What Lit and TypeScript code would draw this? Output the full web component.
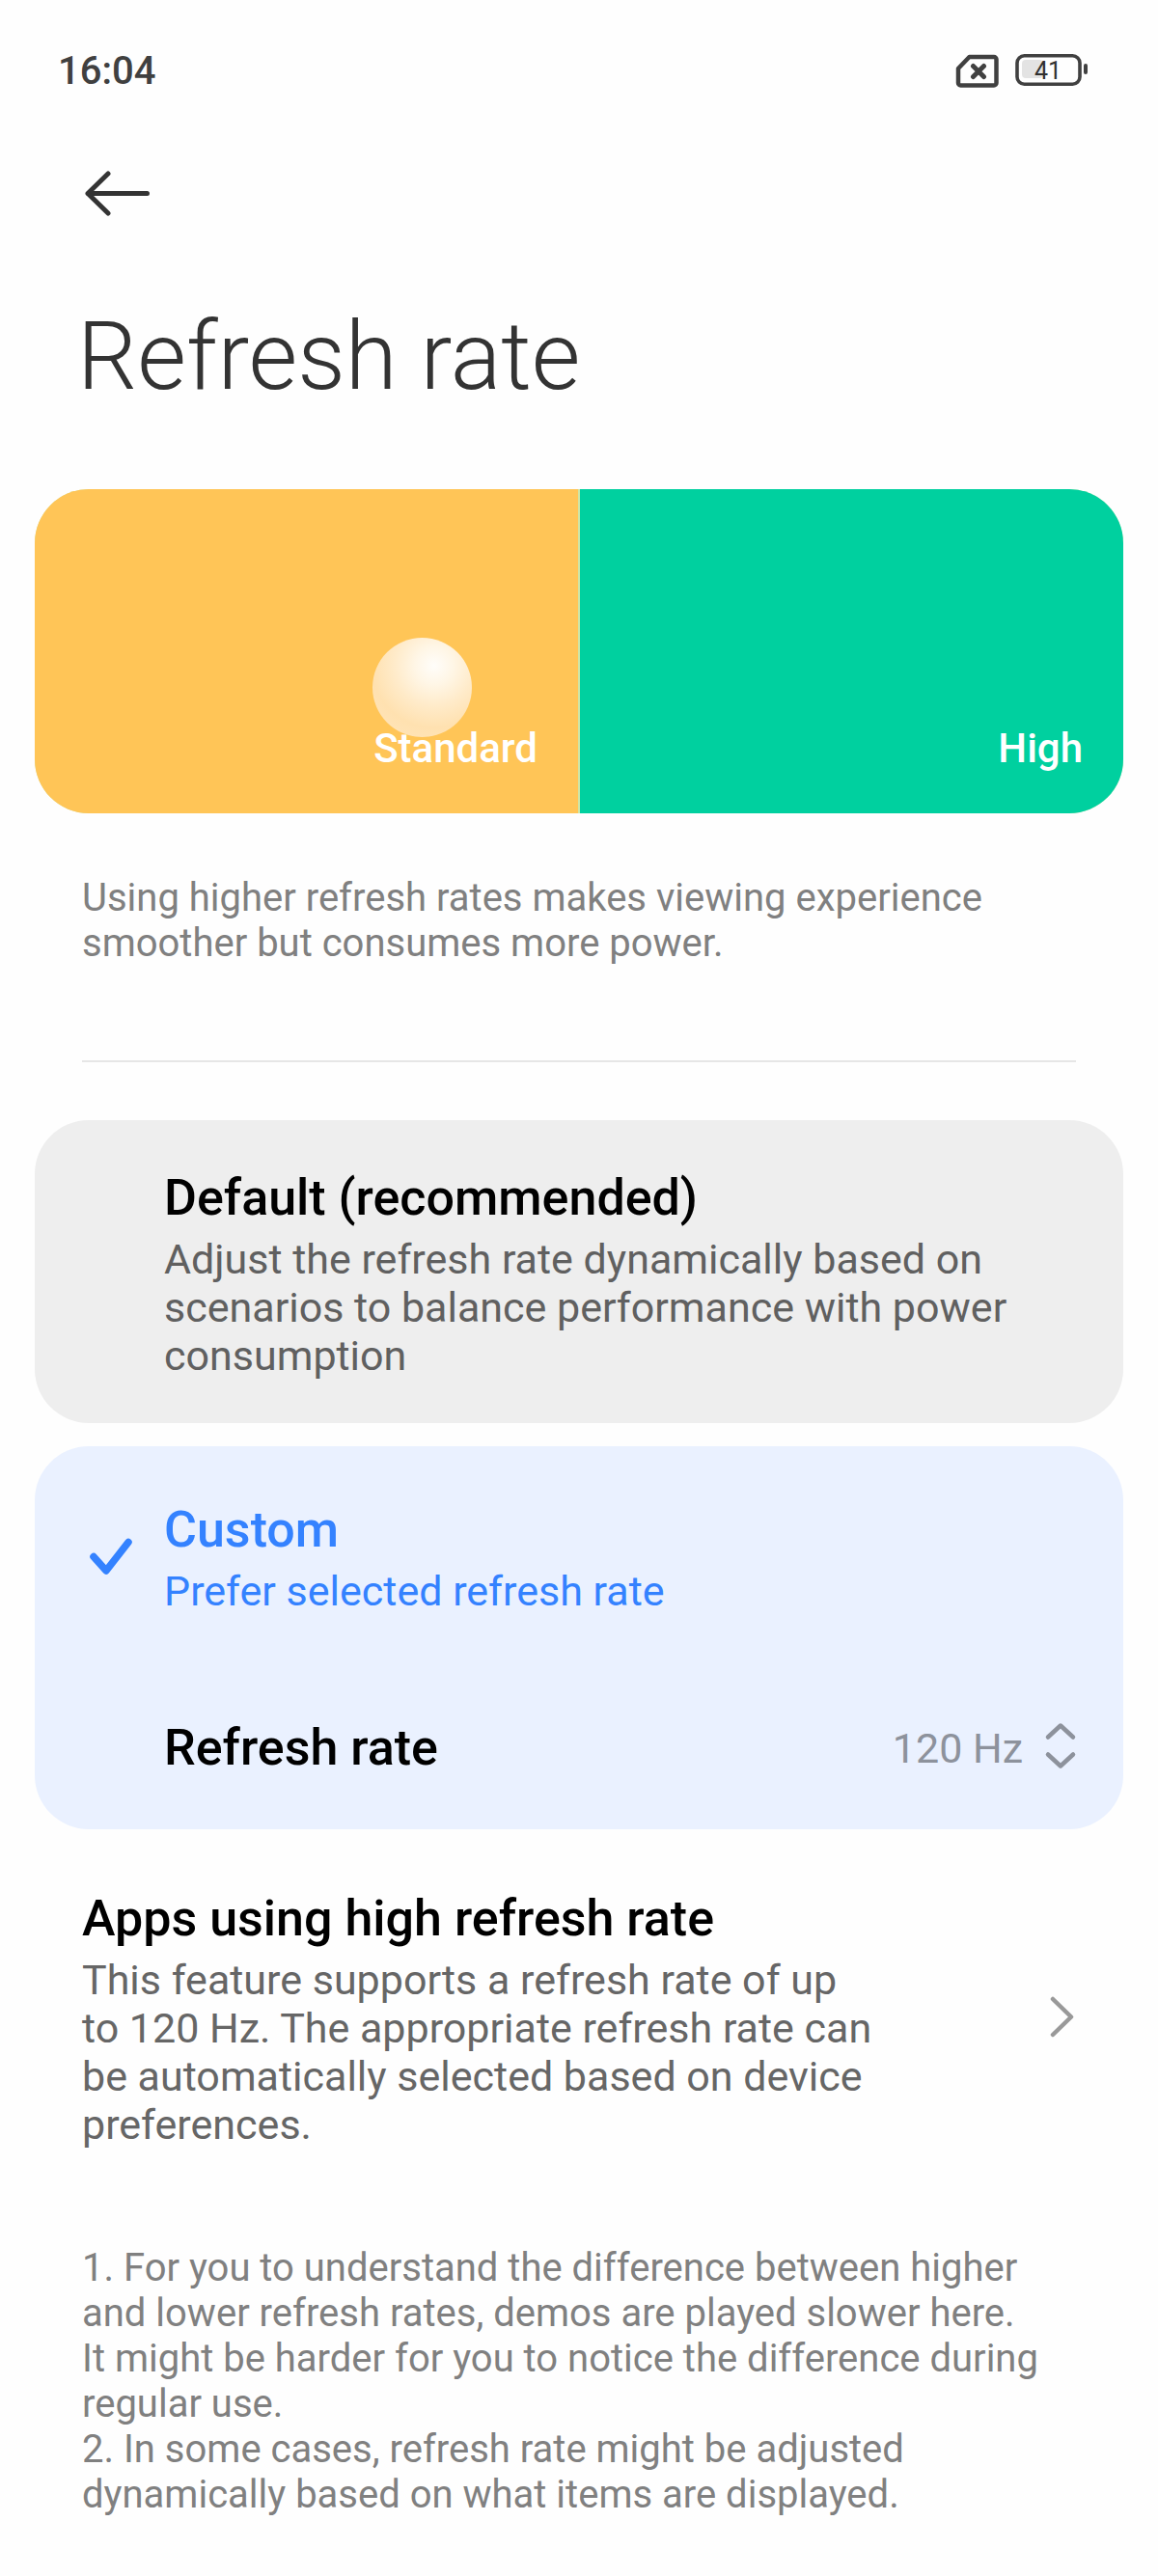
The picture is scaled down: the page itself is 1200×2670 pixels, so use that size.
import { LitElement, html, css } from "lit";
import { customElement, state } from "lit/decorators.js";
import { classMap } from "lit/directives/class-map.js";

@customElement("status-bar")
class StatusBar extends LitElement {
  static styles = css`
    :host {
      display: flex;
      align-items: center;
      justify-content: space-between;
      padding: 50px 72px 0 60px;
      color: #404040;
    }
    .time {
      font-size: 40px;
      line-height: 48px;
      font-weight: 500;
    }
    .icons {
      display: flex;
      align-items: center;
      gap: 16px;
    }
    svg {
      display: block;
    }
    .level {
      font-size: 25px;
      font-weight: 400;
    }
  `;
  render() {
    return html`
      <span class="time">16:04</span>
      <span class="icons">
        <svg width="46" height="36" viewBox="0 0 46 36" fill="none" stroke="#404040" aria-label="No SIM">
          <path d="M14.5 3H40a2.5 2.5 0 0 1 2.500 2.500V30a2.500 2.500 0 0 1-2.500 2.500H5.500A2.500 2.500 0 0 1 3 30V15Z" stroke-width="4.500" stroke-linejoin="round" />
          <path d="M18.500 12.500l11 11M29.500 12.500l-11 11" stroke-width="5" stroke-linecap="round" />
        </svg>
        <svg width="76" height="36" viewBox="0 0 76 36" aria-label="Battery 41 percent">
          <rect x="7" y="6" width="22" height="19" rx="4" fill="#e3e3e3" />
          <rect x="2" y="1.800" width="65" height="29.400" rx="7.500" fill="none" stroke="#404040" stroke-width="3.600" />
          <rect x="71" y="10" width="4" height="11" rx="2" fill="#404040" />
          <text class="level" x="34" y="26" text-anchor="middle" fill="#303030">41</text>
        </svg>
      </span>
    `;
  }
}

@customElement("rate-demo")
class RateDemo extends LitElement {
  static styles = css`
    :host {
      display: grid;
      grid-template-columns: 1fr 1fr;
      gap: 2px;
      height: 336px;
      border-radius: 56px;
      overflow: hidden;
      background: #cfe6a6;
    }
    .pane {
      position: relative;
      display: flex;
      align-items: flex-end;
      justify-content: flex-end;
      padding: 0 42px 42px;
      font-size: 42px;
      line-height: 50px;
      font-weight: 500;
      color: #fff;
    }
    .standard {
      background: #ffc557;
    }
    .high {
      background: #00d09f;
    }
    .label {
      position: relative;
    }
    .ball {
      position: absolute;
      left: 350px;
      top: 154px;
      width: 103px;
      height: 103px;
      border-radius: 50%;
      background: radial-gradient(circle at 62% 28%, #fffdfa 0%, #fff6e6 20%, #ffebca 42%, #ffe1b0 66%, #ffe6be 100%);
    }
  `;
  render() {
    return html`
      <div class="pane standard">
        <span class="ball"></span>
        <span class="label">Standard</span>
      </div>
      <div class="pane high"><span class="label">High</span></div>
    `;
  }
}

@customElement("app-root")
class AppRoot extends LitElement {
  @state() private mode = "custom";

  static styles = css`
    :host {
      display: block;
      min-height: 100vh;
      background: #fefefe;
      color: #000;
      font-family: Roboto, "Noto Sans", sans-serif;
    }
    * {
      box-sizing: border-box;
    }
    h1,
    p {
      margin: 0;
    }
    svg {
      display: block;
      flex: none;
    }
    main {
      padding: 0 36px 48px;
    }
    .bar {
      padding: 70px 82px 0;
    }
    .back {
      display: block;
      padding: 6px;
      border: 0;
      background: none;
    }
    .heading {
      padding: 77px 44px 80px;
      font-size: 98px;
      line-height: 114px;
      font-weight: 300;
      color: #333;
    }
    .note {
      padding: 0 49px;
      font-size: 40px;
      line-height: 47px;
      color: #808080;
    }
    .hint {
      padding-top: 64px;
    }
    .rule {
      height: 2px;
      margin: 98px 49px 60px;
      border: 0;
      background: #e6e6e6;
    }
    .options {
      display: flex;
      flex-direction: column;
      gap: 24px;
      margin: 0;
      padding: 0;
      border: 0;
    }
    .card {
      border-radius: 56px;
      background: #eee;
    }
    .card.selected {
      background: #eaf1ff;
    }
    .option {
      display: grid;
      grid-template-columns: 85px 1fr;
      align-items: center;
      padding: 51px 49px 45px;
    }
    .selected .option {
      padding-top: 57px;
    }
    .option input {
      position: absolute;
      opacity: 0;
    }
    .title {
      display: block;
      font-size: 52px;
      line-height: 60px;
      font-weight: 500;
    }
    .summary {
      display: block;
      margin-top: 8px;
      font-size: 43px;
      line-height: 50px;
      color: #606060;
    }
    .selected .option .title,
    .selected .option .summary {
      color: #3482ff;
    }
    .rate {
      display: flex;
      align-items: center;
      justify-content: space-between;
      padding: 63px 45px 54px 134px;
    }
    .picker {
      display: flex;
      align-items: center;
      gap: 19px;
    }
    select {
      appearance: none;
      field-sizing: content;
      padding: 0;
      border: 0;
      background: none;
      font: inherit;
      font-size: 43px;
      line-height: 50px;
      color: #8d929c;
    }
    .link {
      display: flex;
      align-items: center;
      justify-content: space-between;
      gap: 168px;
      padding: 63px 49px 0;
      color: inherit;
      text-decoration: none;
    }
    .link .summary {
      color: #666;
    }
    .footnotes {
      padding-top: 100px;
    }
  `;

  private card(mode: string, title: string, summary: string, extra: unknown = "") {
    const selected = this.mode === mode;
    return html`
      <div class=${classMap({ card: true, selected })}>
        <label class="option">
          <span>
            <input type="radio" name="mode" .checked=${selected} @change=${() => (this.mode = mode)} />
            ${selected
              ? html`<svg width="56" height="52" viewBox="0 0 56 52" fill="none" stroke="#3482ff" stroke-width="7.500" stroke-linecap="round" stroke-linejoin="round">
                  <path d="M12 24.500L25 39L48 9.500" />
                </svg>`
              : ""}
          </span>
          <span>
            <span class="title">${title}</span>
            <span class="summary">${summary}</span>
          </span>
        </label>
        ${extra}
      </div>
    `;
  }

  render() {
    const rate = html`
      <div class="rate">
        <label class="title" for="rate">Refresh rate</label>
        <span class="picker">
          <select id="rate">
            <option>120 Hz</option>
          </select>
          <svg width="40" height="54" viewBox="0 0 40 54" fill="none" stroke="#8d929c" stroke-width="4.500" stroke-linecap="round" stroke-linejoin="round">
            <path d="M7 15.500L20 3.500L33 15.500M7 33.500L20 45.500L33 33.500" />
          </svg>
        </span>
      </div>
    `;
    return html`
      <status-bar></status-bar>
      <nav class="bar">
        <button class="back" aria-label="Back">
          <svg width="72" height="56" viewBox="0 0 72 56" fill="none" stroke="#333" stroke-width="5" stroke-linecap="round" stroke-linejoin="round">
            <path d="M64.500 26.500H3M24 6L3 26.500L24 47" />
          </svg>
        </button>
      </nav>
      <main>
        <h1 class="heading">Refresh rate</h1>
        <rate-demo></rate-demo>
        <p class="note hint">Using higher refresh rates makes viewing experience smoother but consumes more power.</p>
        <hr class="rule" />
        <fieldset class="options" aria-label="Mode">
          ${this.card("default", "Default (recommended)", "Adjust the refresh rate dynamically based on scenarios to balance performance with power consumption")}
          ${this.card("custom", "Custom", "Prefer selected refresh rate", rate)}
        </fieldset>
        <a class="link" href="#apps">
          <span>
            <span class="title">Apps using high refresh rate</span>
            <span class="summary">This feature supports a refresh rate of up to 120 Hz. The appropriate refresh rate can be automatically selected based on device preferences.</span>
          </span>
          <svg width="32" height="48" viewBox="0 0 32 48" fill="none" stroke="#999" stroke-width="4.500" stroke-linecap="round" stroke-linejoin="round">
            <path d="M8 3L27 21.500L8 40" />
          </svg>
        </a>
        <div class="note footnotes">
          <p>
            1. For you to understand the difference between higher and lower refresh rates, demos are played slower here.<br />
            It might be harder for you to notice the difference during regular use.
          </p>
          <p>2. In some cases, refresh rate might be adjusted dynamically based on what items are displayed.</p>
        </div>
      </main>
    `;
  }
}
